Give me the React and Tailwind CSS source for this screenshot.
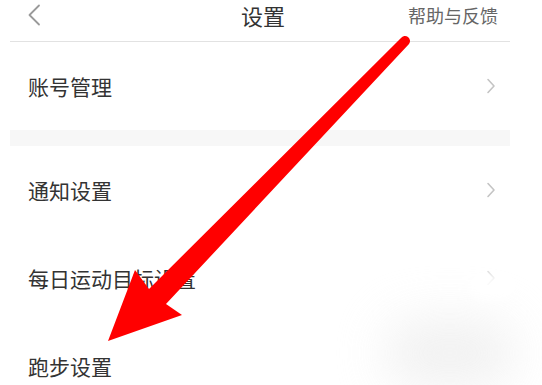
import React from 'react';

const rows = [
  { label: '账号管理', chevron: true },
  { label: '通知设置', chevron: true, gapBefore: true },
  { label: '每日运动目标设置', chevron: true },
  { label: '跑步设置', chevron: false },
];

function Chevron() {
  return (
    <svg width="10" height="16" viewBox="0 0 10 16" fill="none">
      <path d="M2 1.5 L8 8 L2 14.5" stroke="#c4c4c4" strokeWidth="1.6" strokeLinecap="round" strokeLinejoin="round" />
    </svg>
  );
}

export default function App() {
  return (
    <div
      className="relative w-[542px] h-[385px] overflow-hidden bg-white text-[#333]"
      style={{ fontFamily: '"Noto Sans CJK SC", "Noto Sans", sans-serif' }}
    >
      {/* 상단 헤더 */}
      <div className="mx-[10px] w-[500px] h-[42px] border-b border-[#e2e2e2] flex items-start pt-[3px]">
        <div className="w-[60px] pl-[17px] pt-[1px] flex items-center">
          <svg width="14" height="22" viewBox="0 0 14 22" fill="none">
            <path d="M12 1.5 L2.5 11 L12 20.5" stroke="#9a9a9a" strokeWidth="1.8" strokeLinecap="round" strokeLinejoin="round" />
          </svg>
        </div>
        <div className="ml-[171px] text-[22px] leading-[24px] text-[#333]">设置</div>
        <div className="ml-auto pr-[12px] pt-[2px] text-[18px] leading-[20px] text-[#666]">帮助与反馈</div>
      </div>

      {/* 설정 목록 */}
      <div className="mx-[10px] w-[500px]">
        {rows.map((row) => (
          <React.Fragment key={row.label}>
            {row.gapBefore && <div className="h-[16px] bg-[#f7f7f7]" />}
            <div className="flex items-center justify-between pl-[18px] pr-[14px] h-[88px]">
              <span className="text-[21px] leading-none">{row.label}</span>
              {row.chevron && <Chevron />}
            </div>
          </React.Fragment>
        ))}
      </div>

      {/* 흐릿한 워터마크 */}
      <div className="absolute left-[385px] top-[318px] w-[130px] h-[70px] rounded-full bg-[#eeeeee] blur-xl opacity-80" />
      <div className="absolute left-[468px] top-[272px] w-[50px] h-[26px] rounded-full bg-white blur-sm" />

      {/* 빨간 화살표 */}
      <svg className="absolute left-0 top-0 pointer-events-none" width="542" height="385" viewBox="0 0 542 385">
        <path
          d="M401 38 L149 289 L135 270 L108 341 L182 315 L166 304 L409 44 A4.5 4.5 0 0 0 401 38 Z"
          fill="#ff0000"
        />
      </svg>
    </div>
  );
}
